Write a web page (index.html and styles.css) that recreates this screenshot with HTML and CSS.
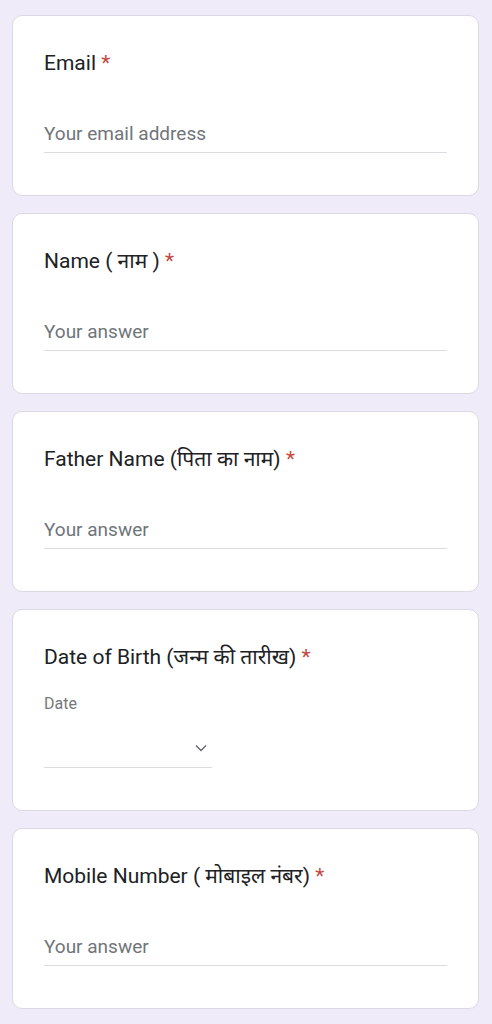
FILE: index.html
```html
<!DOCTYPE html>
<html lang="en">
<head>
<meta charset="utf-8">
<title>Form</title>
<link rel="stylesheet" href="styles.css">
</head>
<body>
<main class="form">
  <section class="card">
    <div class="label">Email <span class="req">*</span></div>
    <div class="input">Your email address</div>
  </section>
  <section class="card">
    <div class="label">Name ( नाम ) <span class="req">*</span></div>
    <div class="input">Your answer</div>
  </section>
  <section class="card">
    <div class="label">Father Name (पिता का नाम) <span class="req">*</span></div>
    <div class="input">Your answer</div>
  </section>
  <section class="card card-date">
    <div class="label">Date of Birth (जन्म की तारीख) <span class="req">*</span></div>
    <div class="sublabel">Date</div>
    <div class="date-input">
      <svg class="chev" width="12" height="8" viewBox="0 0 12 8"><path d="M1 1.5 L6 6.5 L11 1.5" fill="none" stroke="#5f6368" stroke-width="1.3"/></svg>
    </div>
  </section>
  <section class="card">
    <div class="label">Mobile Number ( मोबाइल नंबर) <span class="req">*</span></div>
    <div class="input">Your answer</div>
  </section>
</main>
</body>
</html>
```
FILE: styles.css
```css
html, body {
  margin: 0;
  padding: 0;
  background: #efebf8;
}
body {
  font-family: Roboto, "Noto Sans", "Noto Sans Devanagari", sans-serif;
  color: #202124;
}
.form {
  display: flex;
  flex-direction: column;
  gap: 17px;
  padding: 15px 13px 0 12px;
}
.card {
  background: #fff;
  border: 1px solid #dcd8e4;
  border-radius: 10px;
  padding: 33px 31px 42px 31px;
}
.label {
  font-size: 21px;
  line-height: 28px;
  color: #202124;
}
.req {
  color: #c5473f;
}
.input {
  margin-top: 45px;
  font-size: 19px;
  line-height: 24px;
  color: #70757a;
  padding-bottom: 6px;
  border-bottom: 1px solid #dadce0;
}
.sublabel {
  margin-top: 23px;
  font-size: 16px;
  line-height: 20px;
  color: #75787c;
}
.date-input {
  margin-top: 13px;
  width: 168px;
  height: 40px;
  border-bottom: 1px solid #dadce0;
  display: flex;
  align-items: center;
  justify-content: flex-end;
}
.chev {
  margin-right: 5px;
  margin-top: 2px;
}
```
